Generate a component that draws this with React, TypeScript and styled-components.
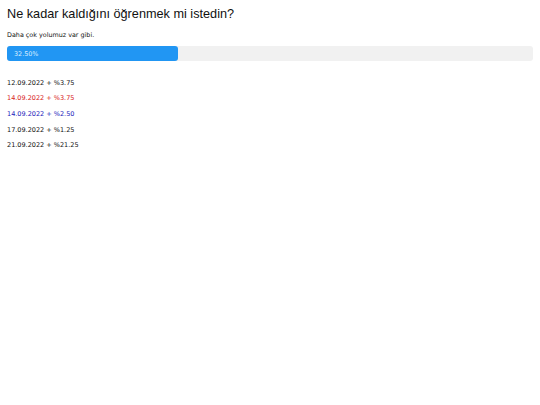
import React from 'react'
import styled, { createGlobalStyle } from 'styled-components';

const GlobalStyle = createGlobalStyle`
    body {
        margin: 0;
        background: #fff;
        font-family: "DejaVu Sans", Verdana, sans-serif;
    }
`;

interface entry {
    date: string,
    amount: string,
    tone?: 'red' | 'blue',
}

const entries: entry[] = [
    { date: '12.09.2022', amount: '%3.75' },
    { date: '14.09.2022', amount: '%3.75', tone: 'red' },
    { date: '14.09.2022', amount: '%2.50', tone: 'blue' },
    { date: '17.09.2022', amount: '%1.25' },
    { date: '21.09.2022', amount: '%21.25' },
];

const progress = 32.5;

const App: React.FC = () => {
  return (
    <Page>
        <GlobalStyle />
        <Title>Ne kadar kaldığını öğrenmek mi istedin?</Title>
        <Subtitle>Daha çok yolumuz var gibi.</Subtitle>
        <Track>
            <Fill style={{ width: `${progress}%` }}>
                {progress.toFixed(2)}%
            </Fill>
        </Track>
        <List>
            {entries.map((e, i) => (
                <Item key={i} tone={e.tone}>
                    {e.date} + {e.amount}
                </Item>
            ))}
        </List>
    </Page>
  )
}

export default App;

const Page = styled.div`
    padding: 6px 7px;
    display: flex;
    flex-direction: column;
`;
const Title = styled.h1`
    margin: 0;
    font-family: "Liberation Sans", Arial, sans-serif;
    font-weight: normal;
    font-size: 12.7px;
    line-height: 16px;
    color: #111;
`;
const Subtitle = styled.p`
    margin: 9px 0 0;
    font-size: 6.4px;
    line-height: 9px;
    color: #111;
`;
const Track = styled.div`
    margin-top: 6px;
    height: 15px;
    background-color: #f1f1f1;
    border-radius: 3px;
    display: flex;
`;
const Fill = styled.div`
    height: 100%;
    background-color: #2196f3;
    border-radius: 3px;
    color: #dbeeff;
    font-size: 6.4px;
    display: flex;
    align-items: center;
    padding-left: 7px;
    box-sizing: border-box;
`;
const List = styled.div`
    margin-top: 17.5px;
    display: flex;
    flex-direction: column;
    gap: 6.7px;
`;
const Item = styled.div<{ tone?: 'red' | 'blue' }>`
    font-size: 6.5px;
    line-height: 9px;
    color: ${p => p.tone === 'red' ? '#d82222' : p.tone === 'blue' ? '#2222bb' : '#111'};
`;
